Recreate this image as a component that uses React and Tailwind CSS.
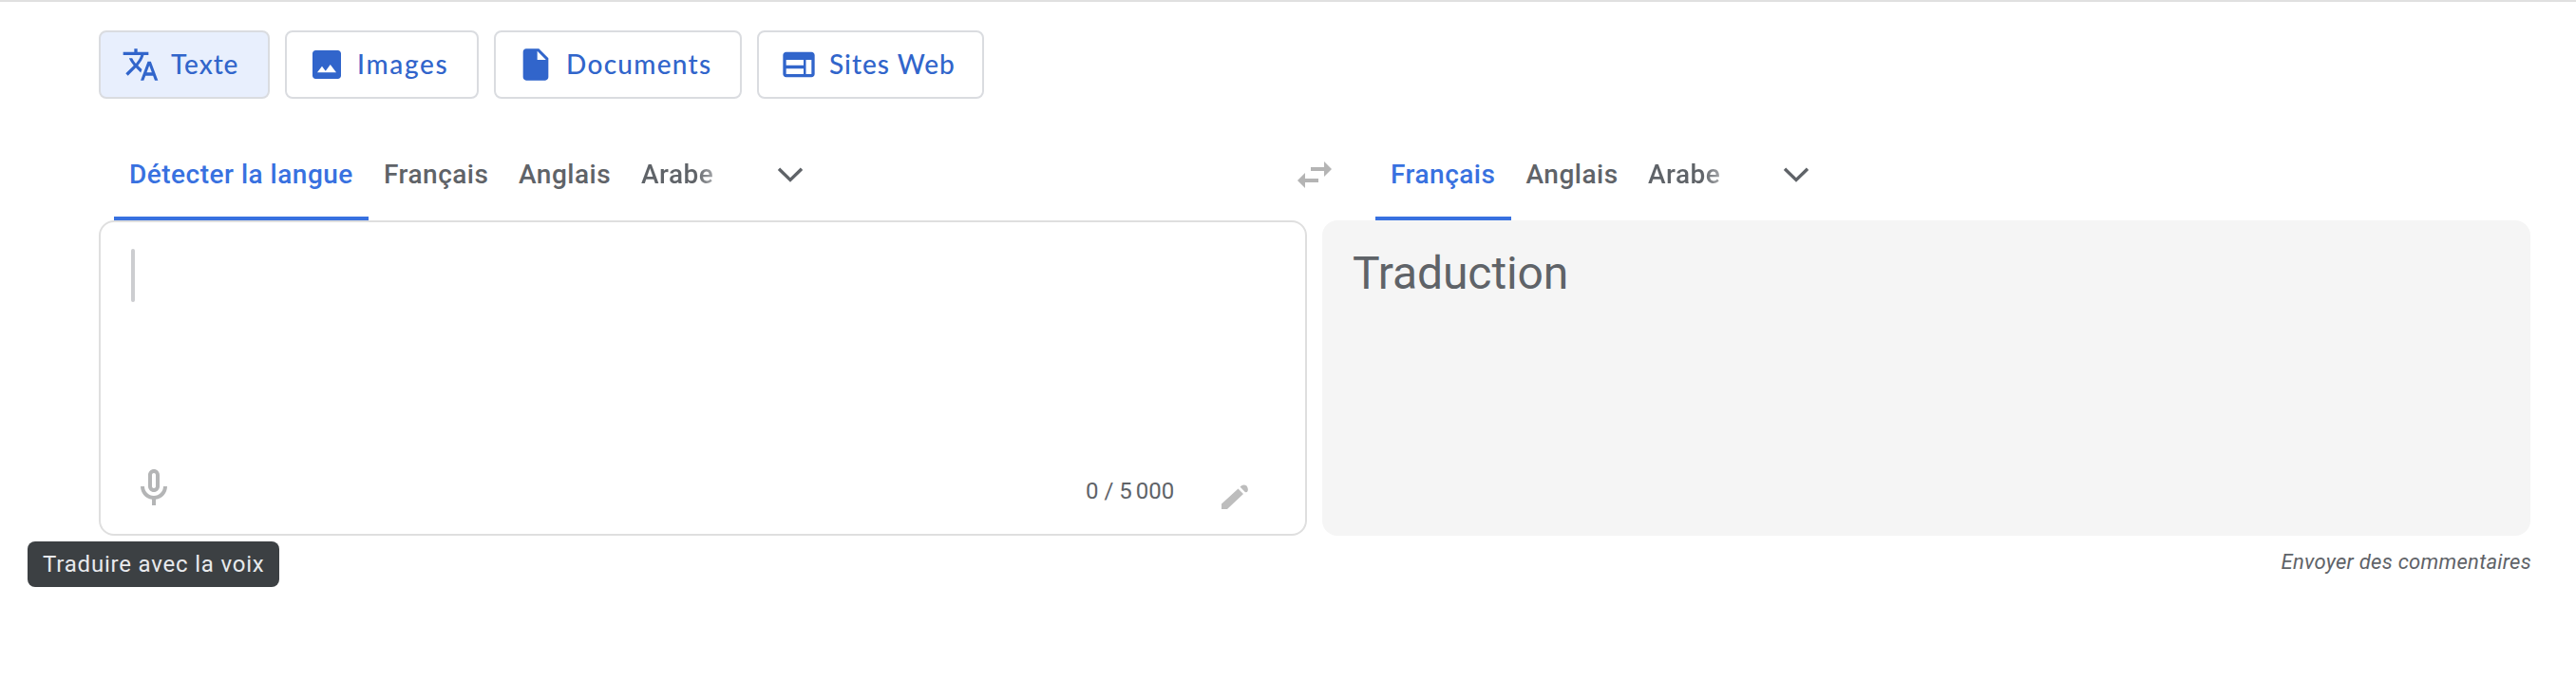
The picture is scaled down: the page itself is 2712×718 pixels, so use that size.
const TABS = ['Français', 'Anglais'];

function Icon({ d, className }) {
  return (
    <svg viewBox="0 0 24 24" fill="currentColor" className={className}>
      <path fillRule="evenodd" d={d} />
    </svg>
  );
}

const ICONS = {
  translate:
    'M12.87 15.07l-2.54-2.51.03-.03c1.74-1.94 2.98-4.17 3.71-6.53H17V4h-7V2H8v2H1v1.99h11.17C11.5 7.92 10.44 9.75 9 11.35 8.07 10.32 7.3 9.19 6.69 8h-2c.73 1.63 1.73 3.17 2.98 4.56l-5.09 5.02L4 19l5-5 3.11 3.11.76-2.04zM18.5 10h-2L12 22h2l1.12-3h4.75L21 22h2l-4.5-12zm-2.62 7l1.62-4.33L19.12 17h-3.24z',
  image:
    'M21 19V5c0-1.1-.9-2-2-2H5c-1.1 0-2 .9-2 2v14c0 1.1.9 2 2 2h14c1.1 0 2-.9 2-2zM6 17l3-4 2.25 3 3-4L18 17H6z',
  file: 'M6 2c-1.1 0-1.99.9-1.99 2L4 20c0 1.1.89 2 1.99 2H18c1.1 0 2-.9 2-2V8l-6-6H6zm7 7V3.5L18.5 9H13z',
  web: 'M20 4H4c-1.1 0-1.99.9-1.99 2L2 18c0 1.1.9 2 2 2h16c1.1 0 2-.9 2-2V6c0-1.1-.9-2-2-2zm-5 14H4v-3.5h11V18zm0-5.5H4V9h11v3.5zm5 5.5h-3.5V9H20v9z',
  swap: 'M6.99 11L3 15l3.99 4v-3H14v-2H6.99v-3zM21 9l-3.99-4v3H10v2h7.01v3L21 9z',
  mic: 'M12 14c1.66 0 3-1.34 3-3V5c0-1.66-1.34-3-3-3S9 3.34 9 5v6c0 1.66 1.34 3 3 3zm-1-9c0-.55.45-1 1-1s1 .45 1 1v6c0 .55-.45 1-1 1s-1-.45-1-1V5zM17 11c0 2.76-2.24 5-5 5s-5-2.24-5-5H5c0 3.53 2.61 6.43 6 6.92V21h2v-3.08c3.39-.49 6-3.39 6-6.92h-2z',
};

function ModeButton({ icon, label, className, labelClass }) {
  return (
    <button
      className={`flex h-[72px] items-center gap-3 rounded-lg border-2 border-[#dadce0] pl-[22px] font-['Lato',sans-serif] text-[28px] leading-9 font-medium text-[#3165cb] ${className}`}
    >
      <Icon d={ICONS[icon]} className="size-10 shrink-0" />
      <span className={`pb-0.5 whitespace-nowrap ${labelClass}`}>{label}</span>
    </button>
  );
}

function Tab({ label, active, className }) {
  return (
    <button
      className={`flex h-full shrink-0 items-center border-b-4 pt-1 pl-4 whitespace-nowrap ${
        active ? 'border-[#3871e0] text-[#3871e0]' : 'border-transparent text-[#5f6368]'
      } ${className}`}
    >
      {label}
    </button>
  );
}

function Chevron() {
  return (
    <svg viewBox="0 0 28 18" className="h-[18px] w-7" fill="none" stroke="#5f6368" strokeWidth="3.4">
      <path d="M2 2.8L14 14.4L26 2.8" />
    </svg>
  );
}

const FADE = 'bg-linear-to-r from-[#5f6368] from-75% to-[#a4a6a9] bg-clip-text text-transparent';

export default function App() {
  return (
    <div className="h-[718px] w-[2712px] overflow-hidden border-t-2 border-[#e0e0e0] bg-white font-['Roboto',sans-serif]">
      <nav className="flex gap-4 pt-[30px] pl-[104px]">
        <ModeButton icon="translate" label="Texte" className="w-[180px] bg-[#e8effd]" labelClass="tracking-[0.9px]" />
        <ModeButton icon="image" label="Images" className="w-[204px]" labelClass="tracking-[1.7px]" />
        <ModeButton icon="file" label="Documents" className="w-[261px]" labelClass="tracking-[1.3px]" />
        <ModeButton icon="web" label="Sites Web" className="w-[239px]" labelClass="tracking-[1px]" />
      </nav>

      <div className="mt-8 flex h-24 items-center pl-[120px] text-[28px] font-medium tracking-[0.5px]">
        <Tab label="Détecter la langue" active className="w-[268px]" />
        <Tab label={TABS[0]} className="w-[142px]" />
        <Tab label={TABS[1]} className="w-[129px]" />
        <Tab label={<span className={FADE}>Arabe</span>} className="w-[159px]" />
        <Chevron />
        <span className="ml-[514px] text-[#b4b4b4]">
          <Icon d={ICONS.swap} className="size-12" />
        </span>
        <Tab label={TABS[0]} active className="ml-10 w-[142.5px]" />
        <Tab label={TABS[1]} className="w-[128.5px]" />
        <Tab label={<span className={FADE}>Arabe</span>} className="w-[158px]" />
        <Chevron />
      </div>

      <main className="flex gap-4 pl-[104px]">
        <section className="flex h-[332px] w-[1272px] flex-col justify-between rounded-2xl border-2 border-[#dfdfdf] pt-7 pl-8">
          <div className="h-14 w-1 rounded-full bg-[#cccdd0]" />
          <div className="flex h-[72px] items-start text-[#b4b5b6]">
            <Icon d={ICONS.mic} className="size-12" />
            <span className="ml-[957px] pt-[13px] text-2xl leading-7 whitespace-nowrap text-[#5f6368]">
              0 / 5<span className="ml-1">000</span>
            </span>
            <svg viewBox="0 0 28 26" className="mt-5 mr-[60px] ml-auto h-[26px] w-7" fill="#bdbdbd">
              <path d="M0 20.5L17.5 4.5L23 10L6 26H0zM19.500 2.500Q23-1 26.500 1.500Q29 5 27 8L25 8.200Z" />
            </svg>
          </div>
        </section>
        <section className="h-[332px] w-[1272px] rounded-2xl bg-[#f5f5f5] pt-[26px] pl-8 text-[48px] leading-[60px] tracking-[-0.1px] text-[#5f6368]">
          Traduction
        </section>
      </main>

      <footer className="flex items-start justify-between pt-1.5 pr-[47px] pl-[29px]">
        <div className="flex h-12 w-[265px] items-center rounded-lg bg-[#3c4043] pl-4 text-2xl tracking-[0.8px] whitespace-nowrap text-[#e8eaed]">
          Traduire avec la voix
        </div>
        <div className="pt-2 text-[22px] leading-7 tracking-[0.28px] text-[#5f6368] italic">Envoyer des commentaires</div>
      </footer>
    </div>
  );
}
